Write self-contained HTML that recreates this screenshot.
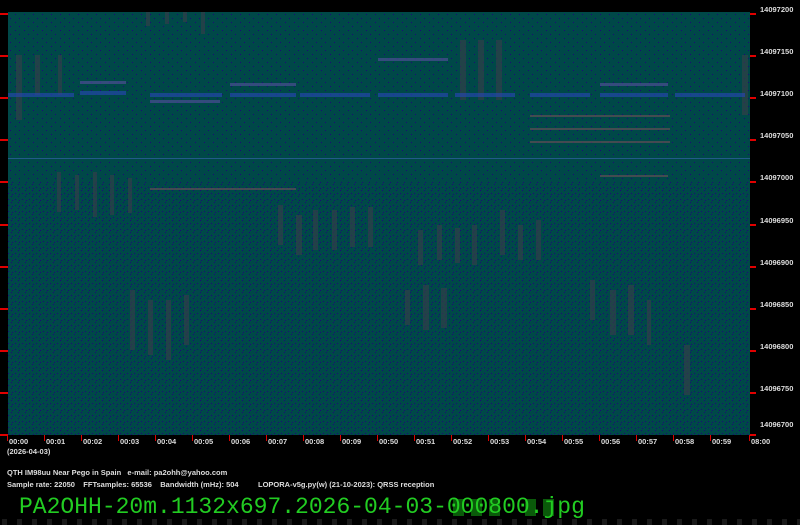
<!DOCTYPE html>
<html><head><meta charset="utf-8"><style>
html,body{margin:0;padding:0;background:#000;width:800px;height:525px;overflow:hidden;position:relative;font-family:"Liberation Sans",sans-serif}
.t{position:absolute;color:#ddd;font-size:7.5px;font-weight:bold;white-space:nowrap}
.fn{position:absolute;left:19px;top:494px;color:#22cc22;font-family:"Liberation Mono",monospace;font-size:23px;white-space:nowrap}
</style></head><body>
<svg width="800" height="525" style="position:absolute;left:0;top:0">
<defs>
<pattern id="d1" width="9" height="8" patternUnits="userSpaceOnUse">
<rect x="1" y="2" width="1" height="1" fill="#1c0a78"/><rect x="6" y="6" width="1" height="1" fill="#1c0a78"/>
</pattern>
<pattern id="d2" width="7" height="6" patternUnits="userSpaceOnUse">
<rect x="1" y="1" width="1" height="1" fill="#1c0a78"/><rect x="4" y="4" width="1" height="1" fill="#1c0a78"/><rect x="5" y="2" width="1" height="1" fill="#1c0a78"/>
</pattern>
<pattern id="sq" width="15" height="6" patternUnits="userSpaceOnUse"><rect x="2" y="0" width="5" height="6" fill="#1a1a1a"/></pattern>
</defs>
<rect x="8" y="12" width="742" height="423" fill="#004848"/>
<rect x="8" y="12" width="742" height="170" fill="url(#d1)"/>
<rect x="8" y="182" width="742" height="253" fill="url(#d2)"/>
<g fill="#3a3f48" opacity="0.6">
<rect x="146" y="12" width="4" height="14"/><rect x="165" y="12" width="4" height="12"/><rect x="183" y="12" width="4" height="10"/><rect x="201" y="12" width="4" height="22"/>
<rect x="16" y="55" width="6" height="65"/><rect x="35" y="55" width="5" height="40"/><rect x="58" y="55" width="4" height="40"/>
<rect x="57" y="172" width="4" height="40"/><rect x="75" y="175" width="4" height="35"/><rect x="93" y="172" width="4" height="45"/><rect x="110" y="175" width="4" height="40"/><rect x="128" y="178" width="4" height="35"/>
<rect x="278" y="205" width="5" height="40"/><rect x="296" y="215" width="6" height="40"/><rect x="313" y="210" width="5" height="40"/><rect x="332" y="210" width="5" height="40"/><rect x="350" y="207" width="5" height="40"/><rect x="368" y="207" width="5" height="40"/>
<rect x="418" y="230" width="5" height="35"/><rect x="437" y="225" width="5" height="35"/><rect x="455" y="228" width="5" height="35"/><rect x="472" y="225" width="5" height="40"/>
<rect x="405" y="290" width="5" height="35"/><rect x="423" y="285" width="6" height="45"/><rect x="441" y="288" width="6" height="40"/>
<rect x="500" y="210" width="5" height="45"/><rect x="518" y="225" width="5" height="35"/><rect x="536" y="220" width="5" height="40"/>
<rect x="590" y="280" width="5" height="40"/><rect x="610" y="290" width="6" height="45"/><rect x="628" y="285" width="6" height="50"/><rect x="647" y="300" width="4" height="45"/>
<rect x="130" y="290" width="5" height="60"/><rect x="148" y="300" width="5" height="55"/><rect x="166" y="300" width="5" height="60"/><rect x="184" y="295" width="5" height="50"/>
<rect x="684" y="345" width="6" height="50"/><rect x="742" y="55" width="6" height="60"/>
<rect x="460" y="40" width="6" height="60"/><rect x="478" y="40" width="6" height="60"/><rect x="496" y="40" width="6" height="60"/>
</g>
<g fill="#2848b8" opacity="0.6">
<rect x="8" y="93" width="66" height="4"/><rect x="80" y="91" width="46" height="4"/><rect x="150" y="93" width="72" height="4"/><rect x="230" y="93" width="66" height="4"/><rect x="300" y="93" width="70" height="4"/><rect x="378" y="93" width="70" height="4"/><rect x="455" y="93" width="60" height="4"/><rect x="530" y="93" width="60" height="4"/><rect x="600" y="93" width="68" height="4"/><rect x="675" y="93" width="70" height="4"/>
</g>
<g fill="#6050a8" opacity="0.55">
<rect x="80" y="81" width="46" height="3"/><rect x="230" y="83" width="66" height="3"/><rect x="378" y="58" width="70" height="3"/><rect x="150" y="100" width="70" height="3"/><rect x="600" y="83" width="68" height="3"/>
</g>
<rect x="8" y="158" width="742" height="1" fill="#2a6098" opacity="0.8"/>
<g fill="#7a5058" opacity="0.55">
<rect x="150" y="188" width="146" height="2"/><rect x="530" y="115" width="140" height="2"/><rect x="530" y="128" width="140" height="2"/><rect x="530" y="141" width="140" height="2"/><rect x="600" y="175" width="68" height="2"/>
</g>
<g fill="#e00000">
<rect x="0" y="13" width="8" height="2"/><rect x="750" y="13" width="6" height="2"/>
<rect x="0" y="55" width="8" height="2"/><rect x="750" y="55" width="6" height="2"/>
<rect x="0" y="97" width="8" height="2"/><rect x="750" y="97" width="6" height="2"/>
<rect x="0" y="139" width="8" height="2"/><rect x="750" y="139" width="6" height="2"/>
<rect x="0" y="181" width="8" height="2"/><rect x="750" y="181" width="6" height="2"/>
<rect x="0" y="224" width="8" height="2"/><rect x="750" y="224" width="6" height="2"/>
<rect x="0" y="266" width="8" height="2"/><rect x="750" y="266" width="6" height="2"/>
<rect x="0" y="308" width="8" height="2"/><rect x="750" y="308" width="6" height="2"/>
<rect x="0" y="350" width="8" height="2"/><rect x="750" y="350" width="6" height="2"/>
<rect x="0" y="392" width="8" height="2"/><rect x="750" y="392" width="6" height="2"/>
<rect x="0" y="434" width="8" height="2"/><rect x="750" y="434" width="6" height="2"/>
<rect x="7" y="435" width="1" height="6"/><rect x="44" y="435" width="1" height="6"/><rect x="81" y="435" width="1" height="6"/><rect x="118" y="435" width="1" height="6"/><rect x="155" y="435" width="1" height="6"/><rect x="192" y="435" width="1" height="6"/><rect x="229" y="435" width="1" height="6"/><rect x="266" y="435" width="1" height="6"/><rect x="303" y="435" width="1" height="6"/><rect x="340" y="435" width="1" height="6"/><rect x="377" y="435" width="1" height="6"/><rect x="414" y="435" width="1" height="6"/><rect x="451" y="435" width="1" height="6"/><rect x="488" y="435" width="1" height="6"/><rect x="525" y="435" width="1" height="6"/><rect x="562" y="435" width="1" height="6"/><rect x="599" y="435" width="1" height="6"/><rect x="636" y="435" width="1" height="6"/><rect x="673" y="435" width="1" height="6"/><rect x="710" y="435" width="1" height="6"/><rect x="749" y="435" width="1" height="6"/>
</g>
<rect x="0" y="519" width="800" height="6" fill="url(#sq)"/>
<g fill="#0a5a0a"><rect x="453" y="499" width="11" height="17"/><rect x="471" y="499" width="11" height="17"/><rect x="489" y="499" width="11" height="17"/><rect x="525" y="499" width="11" height="17"/><rect x="543" y="499" width="11" height="17"/></g>
</svg>
<div class="t" style="left:760px;top:5px">14097200</div>
<div class="t" style="left:760px;top:47px">14097150</div>
<div class="t" style="left:760px;top:89px">14097100</div>
<div class="t" style="left:760px;top:131px">14097050</div>
<div class="t" style="left:760px;top:173px">14097000</div>
<div class="t" style="left:760px;top:216px">14096950</div>
<div class="t" style="left:760px;top:258px">14096900</div>
<div class="t" style="left:760px;top:300px">14096850</div>
<div class="t" style="left:760px;top:342px">14096800</div>
<div class="t" style="left:760px;top:384px">14096750</div>
<div class="t" style="left:760px;top:420px">14096700</div>
<div class="t" style="left:9px;top:437px">00:00</div>
<div class="t" style="left:46px;top:437px">00:01</div>
<div class="t" style="left:83px;top:437px">00:02</div>
<div class="t" style="left:120px;top:437px">00:03</div>
<div class="t" style="left:157px;top:437px">00:04</div>
<div class="t" style="left:194px;top:437px">00:05</div>
<div class="t" style="left:231px;top:437px">00:06</div>
<div class="t" style="left:268px;top:437px">00:07</div>
<div class="t" style="left:305px;top:437px">00:08</div>
<div class="t" style="left:342px;top:437px">00:09</div>
<div class="t" style="left:379px;top:437px">00:50</div>
<div class="t" style="left:416px;top:437px">00:51</div>
<div class="t" style="left:453px;top:437px">00:52</div>
<div class="t" style="left:490px;top:437px">00:53</div>
<div class="t" style="left:527px;top:437px">00:54</div>
<div class="t" style="left:564px;top:437px">00:55</div>
<div class="t" style="left:601px;top:437px">00:56</div>
<div class="t" style="left:638px;top:437px">00:57</div>
<div class="t" style="left:675px;top:437px">00:58</div>
<div class="t" style="left:712px;top:437px">00:59</div>
<div class="t" style="left:751px;top:437px">08:00</div>
<div class="t" style="left:7px;top:447px">(2026-04-03)</div>
<div class="t" style="left:7px;top:468px">QTH IM98uu Near Pego in Spain &nbsp; e-mail: pa2ohh@yahoo.com</div>
<div class="t" style="left:7px;top:480px">Sample rate: 22050 &nbsp;&nbsp; FFTsamples: 65536 &nbsp;&nbsp; Bandwidth (mHz): 504</div>
<div class="t" style="left:258px;top:480px">LOPORA-v5g.py(w) (21-10-2023): QRSS reception</div>
<div class="fn">PA2OHH-20m.1132x697.2026-04-03-000800.jpg</div>
</body></html>
